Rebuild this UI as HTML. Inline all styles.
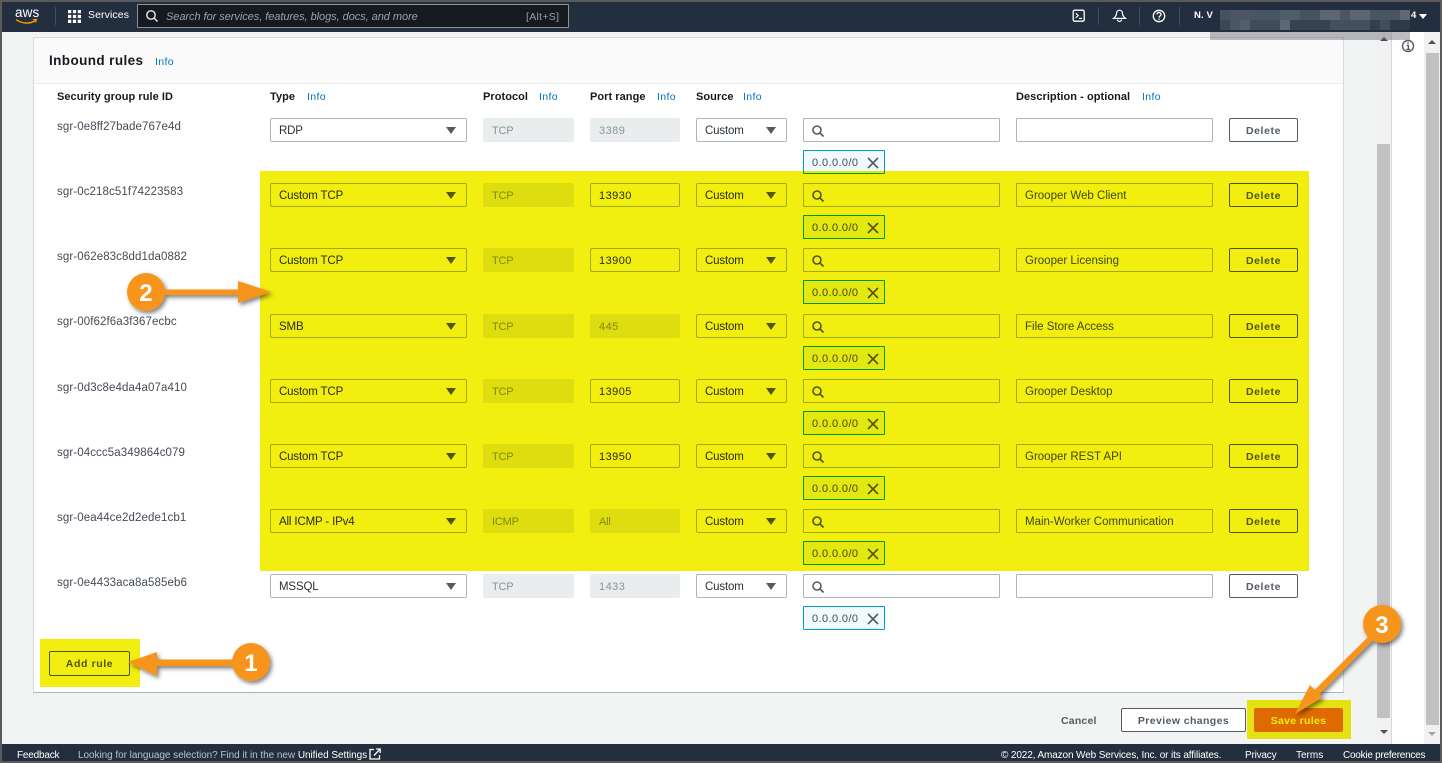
<!DOCTYPE html>
<html lang="en"><head><meta charset="utf-8"><title>Inbound rules</title>
<style>
html,body{margin:0;padding:0;width:1442px;height:763px;overflow:hidden;background:#f2f3f3}
body{position:relative;font-family:"Liberation Sans",sans-serif;font-size:11px;letter-spacing:.2px;color:#16191f}
.a,.s,.i,.d,.t,.p,.l,.h,.id{position:absolute;box-sizing:border-box}
.l{white-space:nowrap;line-height:14px}
.h{font-weight:bold;white-space:nowrap;line-height:14px;top:90px;font-size:11px;letter-spacing:.05px}
.b{color:#0073bb;font-size:10.5px;font-weight:normal;letter-spacing:.35px;white-space:nowrap;position:absolute;line-height:14px}
.id{left:57px;color:#444c56;white-space:nowrap;line-height:14px;font-size:11.5px;letter-spacing:.1px}
.s{height:24px;background:#fff;border:1px solid #aab7b8;border-radius:2px;padding-left:8px;line-height:24px;color:#2b3038;font-size:11.5px;letter-spacing:-.15px}
.s:after{content:"";position:absolute;right:10px;top:8px;border-left:5px solid transparent;border-right:5px solid transparent;border-top:7px solid #545b64}
.s.n{font-size:11px;letter-spacing:.45px}
.s.n:after{display:none}
.p{height:24px;background:#eaeded;border-radius:2px;padding-left:9px;line-height:26px;color:#879596;letter-spacing:-.2px}
.p.n{letter-spacing:.45px}
.i{left:803px;width:197px;height:24px;background:#fff;border:1px solid #aab7b8;border-radius:1px}
.i svg{position:absolute;left:7px;top:5px}
.d{left:1016px;width:197px;height:24px;background:#fff;border:1px solid #aab7b8;border-radius:1px;padding-left:8px;line-height:24px;color:#444c56;font-size:11.5px;letter-spacing:0}
.t{left:803px;width:82px;height:24px;background:#f1faff;border:1px solid #00a1c9;border-radius:1px;padding-left:8px;line-height:24px;color:#444c56;letter-spacing:.4px}
.t svg{position:absolute;left:62px;top:5px}
.x{left:1229px;position:absolute;box-sizing:border-box;width:69px;height:24px;background:#fff;border:1px solid #545b64;border-radius:2px;text-align:center;line-height:24px;font-weight:bold;color:#545b64;font-size:10.5px;letter-spacing:.6px}
</style></head><body>

<!-- window frame -->
<div class="a" style="left:0;top:0;width:1442px;height:2px;background:#5a5a5a"></div>
<div class="a" style="left:0;top:0;width:2px;height:763px;background:#5a5a5a"></div>
<div class="a" style="right:0;top:0;width:2px;height:763px;background:#5a5a5a"></div>

<!-- card -->
<div class="a" style="left:33px;top:37px;width:1311px;height:656px;background:#fff;border:1px solid #d5dbdb;border-bottom:1px solid #aab7b8"></div>
<div class="a" style="left:34px;top:38px;width:1309px;height:46px;background:#fafafa;border-bottom:1px solid #eaeded"></div>
<div class="l" style="left:49px;top:54px;font-size:13.5px;font-weight:bold;letter-spacing:.4px">Inbound rules</div>
<div class="b" style="left:155px;top:55px">Info</div>

<div class="h" style="left:57px">Security group rule ID</div>
<div class="h" style="left:270px">Type</div><div class="b" style="left:307px;top:90px">Info</div>
<div class="h" style="left:483px">Protocol</div><div class="b" style="left:539px;top:90px">Info</div>
<div class="h" style="left:590px">Port range</div><div class="b" style="left:657px;top:90px">Info</div>
<div class="h" style="left:696px">Source</div><div class="b" style="left:743px;top:90px">Info</div>
<div class="h" style="left:1016px">Description - optional</div><div class="b" style="left:1142px;top:90px">Info</div>

<!-- row 1 -->
<div class="id" style="top:120px">sgr-0e8ff27bade767e4d</div>
<div class="s" style="left:270px;top:118px;width:197px">RDP</div>
<div class="p" style="left:483px;top:118px;width:91px">TCP</div>
<div class="p n" style="left:590px;top:118px;width:90px">3389</div>
<div class="s" style="left:696px;top:118px;width:91px">Custom</div>
<div class="i" style="top:118px"><svg width="14" height="14" viewBox="0 0 14 14" fill="none" stroke="#545b64" stroke-width="1.6"><circle cx="6" cy="6" r="4"/><path d="M9 9l3.5 3.5"/></svg></div>
<div class="d" style="top:118px"></div>
<div class="x" style="top:118px">Delete</div>
<div class="t" style="top:150px">0.0.0.0/0<svg width="14" height="14" viewBox="0 0 14 14" fill="none" stroke="#545b64" stroke-width="1.6"><path d="M2 2l10 10M12 2L2 12"/></svg></div>

<!-- row 2 -->
<div class="id" style="top:185px">sgr-0c218c51f74223583</div>
<div class="s" style="left:270px;top:183px;width:197px">Custom TCP</div>
<div class="p" style="left:483px;top:183px;width:91px">TCP</div>
<div class="s n" style="left:590px;top:183px;width:90px">13930</div>
<div class="s" style="left:696px;top:183px;width:91px">Custom</div>
<div class="i" style="top:183px"><svg width="14" height="14" viewBox="0 0 14 14" fill="none" stroke="#545b64" stroke-width="1.6"><circle cx="6" cy="6" r="4"/><path d="M9 9l3.5 3.5"/></svg></div>
<div class="d" style="top:183px">Grooper Web Client</div>
<div class="x" style="top:183px">Delete</div>
<div class="t" style="top:215px">0.0.0.0/0<svg width="14" height="14" viewBox="0 0 14 14" fill="none" stroke="#545b64" stroke-width="1.6"><path d="M2 2l10 10M12 2L2 12"/></svg></div>

<!-- row 3 -->
<div class="id" style="top:250px">sgr-062e83c8dd1da0882</div>
<div class="s" style="left:270px;top:248px;width:197px">Custom TCP</div>
<div class="p" style="left:483px;top:248px;width:91px">TCP</div>
<div class="s n" style="left:590px;top:248px;width:90px">13900</div>
<div class="s" style="left:696px;top:248px;width:91px">Custom</div>
<div class="i" style="top:248px"><svg width="14" height="14" viewBox="0 0 14 14" fill="none" stroke="#545b64" stroke-width="1.6"><circle cx="6" cy="6" r="4"/><path d="M9 9l3.5 3.5"/></svg></div>
<div class="d" style="top:248px">Grooper Licensing</div>
<div class="x" style="top:248px">Delete</div>
<div class="t" style="top:280px">0.0.0.0/0<svg width="14" height="14" viewBox="0 0 14 14" fill="none" stroke="#545b64" stroke-width="1.6"><path d="M2 2l10 10M12 2L2 12"/></svg></div>

<!-- row 4 -->
<div class="id" style="top:315px">sgr-00f62f6a3f367ecbc</div>
<div class="s" style="left:270px;top:314px;width:197px">SMB</div>
<div class="p" style="left:483px;top:314px;width:91px">TCP</div>
<div class="p n" style="left:590px;top:314px;width:90px">445</div>
<div class="s" style="left:696px;top:314px;width:91px">Custom</div>
<div class="i" style="top:314px"><svg width="14" height="14" viewBox="0 0 14 14" fill="none" stroke="#545b64" stroke-width="1.6"><circle cx="6" cy="6" r="4"/><path d="M9 9l3.5 3.5"/></svg></div>
<div class="d" style="top:314px">File Store Access</div>
<div class="x" style="top:314px">Delete</div>
<div class="t" style="top:346px">0.0.0.0/0<svg width="14" height="14" viewBox="0 0 14 14" fill="none" stroke="#545b64" stroke-width="1.6"><path d="M2 2l10 10M12 2L2 12"/></svg></div>

<!-- row 5 -->
<div class="id" style="top:381px">sgr-0d3c8e4da4a07a410</div>
<div class="s" style="left:270px;top:379px;width:197px">Custom TCP</div>
<div class="p" style="left:483px;top:379px;width:91px">TCP</div>
<div class="s n" style="left:590px;top:379px;width:90px">13905</div>
<div class="s" style="left:696px;top:379px;width:91px">Custom</div>
<div class="i" style="top:379px"><svg width="14" height="14" viewBox="0 0 14 14" fill="none" stroke="#545b64" stroke-width="1.6"><circle cx="6" cy="6" r="4"/><path d="M9 9l3.5 3.5"/></svg></div>
<div class="d" style="top:379px">Grooper Desktop</div>
<div class="x" style="top:379px">Delete</div>
<div class="t" style="top:411px">0.0.0.0/0<svg width="14" height="14" viewBox="0 0 14 14" fill="none" stroke="#545b64" stroke-width="1.6"><path d="M2 2l10 10M12 2L2 12"/></svg></div>

<!-- row 6 -->
<div class="id" style="top:446px">sgr-04ccc5a349864c079</div>
<div class="s" style="left:270px;top:444px;width:197px">Custom TCP</div>
<div class="p" style="left:483px;top:444px;width:91px">TCP</div>
<div class="s n" style="left:590px;top:444px;width:90px">13950</div>
<div class="s" style="left:696px;top:444px;width:91px">Custom</div>
<div class="i" style="top:444px"><svg width="14" height="14" viewBox="0 0 14 14" fill="none" stroke="#545b64" stroke-width="1.6"><circle cx="6" cy="6" r="4"/><path d="M9 9l3.5 3.5"/></svg></div>
<div class="d" style="top:444px">Grooper REST API</div>
<div class="x" style="top:444px">Delete</div>
<div class="t" style="top:476px">0.0.0.0/0<svg width="14" height="14" viewBox="0 0 14 14" fill="none" stroke="#545b64" stroke-width="1.6"><path d="M2 2l10 10M12 2L2 12"/></svg></div>

<!-- row 7 -->
<div class="id" style="top:511px">sgr-0ea44ce2d2ede1cb1</div>
<div class="s" style="left:270px;top:509px;width:197px">All ICMP - IPv4</div>
<div class="p" style="left:483px;top:509px;width:91px">ICMP</div>
<div class="p" style="left:590px;top:509px;width:90px">All</div>
<div class="s" style="left:696px;top:509px;width:91px">Custom</div>
<div class="i" style="top:509px"><svg width="14" height="14" viewBox="0 0 14 14" fill="none" stroke="#545b64" stroke-width="1.6"><circle cx="6" cy="6" r="4"/><path d="M9 9l3.5 3.5"/></svg></div>
<div class="d" style="top:509px">Main-Worker Communication</div>
<div class="x" style="top:509px">Delete</div>
<div class="t" style="top:541px">0.0.0.0/0<svg width="14" height="14" viewBox="0 0 14 14" fill="none" stroke="#545b64" stroke-width="1.6"><path d="M2 2l10 10M12 2L2 12"/></svg></div>

<!-- row 8 -->
<div class="id" style="top:576px">sgr-0e4433aca8a585eb6</div>
<div class="s" style="left:270px;top:574px;width:197px">MSSQL</div>
<div class="p" style="left:483px;top:574px;width:91px">TCP</div>
<div class="p n" style="left:590px;top:574px;width:90px">1433</div>
<div class="s" style="left:696px;top:574px;width:91px">Custom</div>
<div class="i" style="top:574px"><svg width="14" height="14" viewBox="0 0 14 14" fill="none" stroke="#545b64" stroke-width="1.6"><circle cx="6" cy="6" r="4"/><path d="M9 9l3.5 3.5"/></svg></div>
<div class="d" style="top:574px"></div>
<div class="x" style="top:574px">Delete</div>
<div class="t" style="top:606px">0.0.0.0/0<svg width="14" height="14" viewBox="0 0 14 14" fill="none" stroke="#545b64" stroke-width="1.6"><path d="M2 2l10 10M12 2L2 12"/></svg></div>

<!-- add rule -->
<div class="x" style="left:49px;top:651px;width:81px;height:25px;line-height:25px;border-color:#545b64">Add rule</div>

<!-- footer actions -->
<div class="l" style="left:1061px;top:714px;font-weight:bold;color:#545b64;font-size:10.5px;letter-spacing:.2px">Cancel</div>
<div class="x" style="left:1121px;top:708px;width:125px;height:24px;font-size:10.5px;letter-spacing:.4px">Preview changes</div>
<div class="x" style="left:1254px;top:708px;width:89px;height:24px;background:#ec7211;border-color:#ec7211;color:#fff;letter-spacing:.3px">Save rules</div>

<!-- inner scrollbar -->
<div class="a" style="left:1376px;top:32px;width:16px;height:712px;background:#f1f1f1"></div>
<div class="a" style="left:1377px;top:144px;width:13px;height:574px;background:#c1c1c1"></div>
<div class="a" style="left:1380px;top:37px;border-left:4px solid transparent;border-right:4px solid transparent;border-bottom:4px solid #505050"></div>
<div class="a" style="left:1380px;top:730px;border-left:4px solid transparent;border-right:4px solid transparent;border-top:4px solid #505050"></div>
<div class="a" style="left:1391px;top:32px;width:1px;height:712px;background:#d5dbdb"></div>
<!-- tools strip -->
<div class="a" style="left:1392px;top:32px;width:32px;height:712px;background:#fff"></div>
<svg class="a" style="left:1401px;top:39px" width="14" height="14" viewBox="0 0 14 14" fill="none" stroke="#545b64"><circle cx="7" cy="7" r="5.5" stroke-width="1.4"/><path d="M7 3.4v1.6M5.6 6.4H7.4V10M5.4 10.4h3.6" stroke-width="1.4"/></svg>
<!-- outer scrollbar -->
<div class="a" style="left:1424px;top:32px;width:16px;height:712px;background:#f1f1f1"></div>
<div class="a" style="left:1426px;top:53px;width:13px;height:672px;background:#c1c1c1"></div>
<div class="a" style="left:1428px;top:40px;border-left:4px solid transparent;border-right:4px solid transparent;border-bottom:4px solid #505050"></div>
<div class="a" style="left:1428px;top:732px;border-left:4px solid transparent;border-right:4px solid transparent;border-top:4px solid #a3a3a3"></div>

<!-- yellow highlights -->
<div class="a" style="left:260px;top:171px;width:1049px;height:400px;background:#f1ee10;mix-blend-mode:multiply"></div>
<div class="a" style="left:40px;top:639px;width:100px;height:48px;background:#f1ee10;mix-blend-mode:multiply"></div>
<div class="a" style="left:1247px;top:700px;width:104px;height:39px;background:#f1ee10;mix-blend-mode:multiply"></div>

<!-- top nav -->
<div class="a" style="left:2px;top:2px;width:1438px;height:30px;background:#232f3e"></div>
<div class="l" style="left:15px;top:6px;color:#fff;font-size:13.5px;letter-spacing:.1px;line-height:14px">aws</div>
<svg class="a" style="left:15px;top:18px" width="23" height="8" viewBox="0 0 23 8" fill="none"><path d="M1 1.5C7 6 15 6 20.5 2.5" stroke="#f90" stroke-width="1.4"/><path d="M18 1.6l3.4-.2-.8 3.2" stroke="#f90" stroke-width="1.1"/></svg>
<div class="a" style="left:55px;top:7px;width:1px;height:18px;background:#414d5c"></div>
<svg class="a" style="left:68px;top:10px" width="13" height="13" viewBox="0 0 12 12" fill="#fff"><rect x="0" y="0" width="3" height="3"/><rect x="4.5" y="0" width="3" height="3"/><rect x="9" y="0" width="3" height="3"/><rect x="0" y="4.5" width="3" height="3"/><rect x="4.5" y="4.5" width="3" height="3"/><rect x="9" y="4.5" width="3" height="3"/><rect x="0" y="9" width="3" height="3"/><rect x="4.5" y="9" width="3" height="3"/><rect x="9" y="9" width="3" height="3"/></svg>
<div class="l" style="left:88px;top:8px;color:#fff;font-size:10.5px;letter-spacing:.1px">Services</div>
<div class="a" style="left:137px;top:4px;width:432px;height:24px;background:#16191f;border:1px solid #879596;border-radius:1px"></div>
<svg class="a" style="left:145px;top:9px" width="14" height="14" viewBox="0 0 14 14" fill="none" stroke="#eaeded" stroke-width="1.4"><circle cx="6" cy="6" r="4.2"/><path d="M9 9l3.5 3.5"/></svg>
<div class="l" style="left:166px;top:10px;color:#95a5a6;font-style:italic;font-size:11px;letter-spacing:-.05px">Search for services, features, blogs, docs, and more</div>
<div class="l" style="left:526px;top:10px;color:#95a5a6;font-size:10.5px;letter-spacing:.3px">[Alt+S]</div>
<svg class="a" style="left:1072px;top:9px" width="14" height="14" viewBox="0 0 14 14" fill="none" stroke="#fff"><rect x="1.2" y="1.2" width="11" height="11" rx="1.5" stroke-width="1.3"/><path d="M3.8 4.2l2.4 2.3-2.4 2.3M7 9.4h3" stroke-width="1.1"/></svg>
<div class="a" style="left:1098px;top:7px;width:1px;height:18px;background:#414d5c"></div>
<svg class="a" style="left:1112px;top:9px" width="15" height="14" viewBox="0 0 15 14" fill="none" stroke="#fff" stroke-width="1.2"><path d="M7.5 1.2c-2 0-3 1.6-3 3.4 0 2.2-1.6 3.6-3 4.8h12c-1.4-1.2-3-2.6-3-4.8 0-1.8-1-3.4-3-3.4z"/><path d="M5.5 10.5c0 2.6 4 2.6 4 0"/></svg>
<div class="a" style="left:1139px;top:7px;width:1px;height:18px;background:#414d5c"></div>
<svg class="a" style="left:1152px;top:9px" width="14" height="14" viewBox="0 0 14 14" fill="none" stroke="#fff" stroke-width="1.3"><circle cx="7" cy="7" r="5.7"/><path d="M5 5.4c0-2.6 4-2.6 4 0 0 1.6-2 1.6-2 3.2"/><path d="M7 9.6v1.3"/></svg>
<div class="a" style="left:1179px;top:7px;width:1px;height:18px;background:#414d5c"></div>
<div class="l" style="left:1194px;top:9px;color:#fff;font-size:9.5px;font-weight:bold;letter-spacing:.1px">N. V</div>
<div class="l" style="left:1411px;top:9px;color:#fff;font-size:9.5px;font-weight:bold">4</div>
<div class="a" style="left:1419px;top:14px;border-left:4px solid transparent;border-right:4px solid transparent;border-top:5px solid #fff"></div>

<!-- pixelated redaction -->
<svg class="a" style="left:1220px;top:10px" width="190" height="20" shape-rendering="crispEdges">
<rect width="190" height="20" fill="#414d5c"/>
<rect x="0" y="0" width="10" height="10" fill="#46515f"/><rect x="10" y="0" width="20" height="10" fill="#4b5563"/><rect x="30" y="0" width="30" height="10" fill="#4a5563"/><rect x="60" y="0" width="20" height="10" fill="#515c69"/><rect x="80" y="0" width="20" height="10" fill="#47525f"/><rect x="100" y="0" width="20" height="10" fill="#5d6773"/><rect x="120" y="0" width="10" height="10" fill="#4c5663"/><rect x="130" y="0" width="20" height="10" fill="#5d6773"/><rect x="150" y="0" width="30" height="10" fill="#4a5562"/><rect x="180" y="0" width="10" height="10" fill="#5f6874"/>
<rect x="0" y="10" width="10" height="10" fill="#3c4755"/><rect x="10" y="10" width="10" height="10" fill="#4b5563"/><rect x="20" y="10" width="10" height="10" fill="#535d6b"/><rect x="30" y="10" width="30" height="10" fill="#414c5a"/><rect x="60" y="10" width="10" height="10" fill="#5e6874"/><rect x="70" y="10" width="40" height="10" fill="#37424f"/><rect x="110" y="10" width="40" height="10" fill="#454f5d"/><rect x="150" y="10" width="10" height="10" fill="#343f4c"/><rect x="160" y="10" width="10" height="10" fill="#424d5a"/><rect x="170" y="10" width="20" height="10" fill="#2f3a48"/>
</svg>
<div class="a" style="left:1210px;top:32px;width:200px;height:8px;background:rgba(90,90,100,.4)"></div>

<!-- bottom footer -->
<div class="a" style="left:2px;top:744px;width:1438px;height:17px;background:#232f3e"></div>
<div class="a" style="left:0;top:761px;width:1442px;height:2px;background:#5a5a5a"></div>
<div class="l" style="left:17px;top:749px;color:#fff;font-size:10px;letter-spacing:-.2px">Feedback</div>
<div class="l" style="left:78px;top:749px;color:#b5c0c9;font-size:10px;letter-spacing:-.05px">Looking for language selection? Find it in the new <span style="color:#fff">Unified Settings</span></div>
<svg class="a" style="left:369px;top:748px" width="12" height="12" viewBox="0 0 12 12" fill="none" stroke="#fff" stroke-width="1.3"><path d="M5 1.5H1v9.5h9.5V7"/><path d="M5 7.5L11 1.2M7.2 1h4v4"/></svg>
<div class="l" style="left:1001px;top:749px;color:#fff;font-size:10px;letter-spacing:-.12px">© 2022, Amazon Web Services, Inc. or its affiliates.</div>
<div class="l" style="left:1245px;top:749px;color:#fff;font-size:10px;letter-spacing:-.2px">Privacy</div>
<div class="l" style="left:1296px;top:749px;color:#fff;font-size:10px;letter-spacing:0">Terms</div>
<div class="l" style="left:1343px;top:749px;color:#fff;font-size:10px;letter-spacing:-.25px">Cookie preferences</div>

<!-- callouts -->
<svg class="a" style="left:0;top:0;pointer-events:none" width="1442" height="763">
<defs><filter id="sh" x="-30%" y="-30%" width="170%" height="170%"><feDropShadow dx="2" dy="2.5" stdDeviation="2" flood-color="#000" flood-opacity=".5"/></filter></defs>
<g fill="#f7941e" filter="url(#sh)">
<path d="M128 662L157 652V659.5H235V666H157V676Z"/>
<circle cx="251" cy="662" r="19"/>
</g>
<g fill="#f7941e" filter="url(#sh)">
<path d="M271 292L238 281V289.5H160V295H238V303Z"/>
<circle cx="146" cy="292" r="19"/>
</g>
<g fill="#f7941e" filter="url(#sh)">
<path d="M1295 714L1310 685L1314.5 690L1370 635L1374 639L1319 694.5L1323 697Z"/>
<circle cx="1382" cy="624" r="19"/>
</g>
<g font-family="Liberation Sans, sans-serif" font-weight="bold" font-size="24" fill="#fff" text-anchor="middle">
<text x="251" y="671">1</text><text x="146" y="301">2</text><text x="1382" y="633">3</text>
</g>
</svg>
</body></html>
